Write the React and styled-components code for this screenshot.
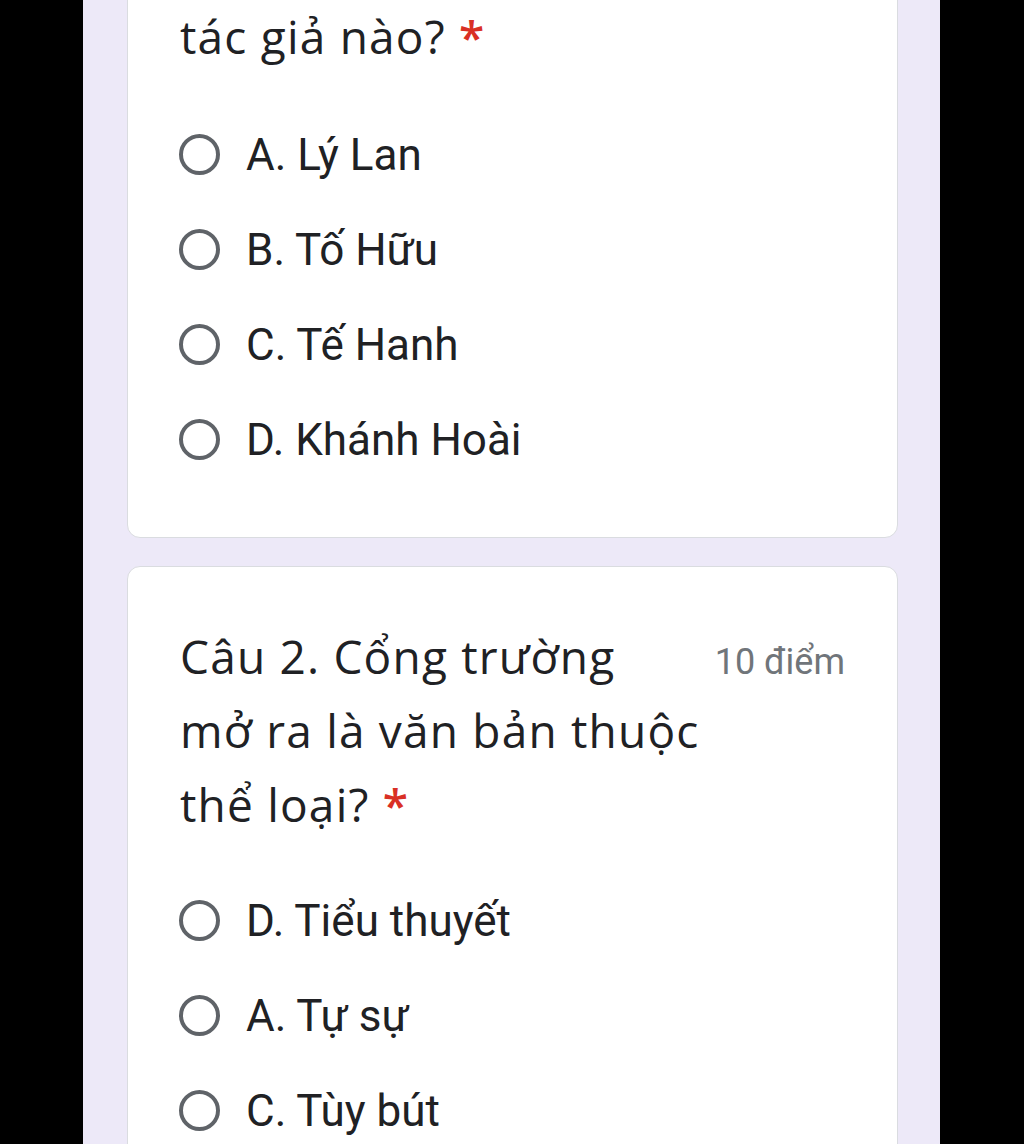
import React from "react";
import styled, { createGlobalStyle } from "styled-components";

const GlobalStyle = createGlobalStyle`
  html, body {
    margin: 0;
    padding: 0;
    background: #000;
    overflow: hidden;
  }
`;

const Column = styled.div`
  width: 857px;
  min-height: 1144px;
  margin-left: 83px;
  padding: 0 42px 0 44px;
  box-sizing: border-box;
  background: #ede9f8;
  overflow: hidden;
`;

const Scroll = styled.div`
  margin-top: -26px;
  display: flex;
  flex-direction: column;
  gap: 28px;
`;

const Card = styled.section`
  background: #fff;
  border: 1px solid #dadce0;
  border-radius: 13px;
  padding: ${(p) => p.$top}px 52px ${(p) => p.$bottom}px 52px;
`;

const Header = styled.div`
  display: flex;
  align-items: baseline;
  justify-content: space-between;
  gap: 10px;
`;

const Title = styled.h2`
  margin: 0;
  white-space: pre;
  font-family: "Open Sans", "Noto Sans", sans-serif;
  font-weight: 400;
  font-size: 46px;
  letter-spacing: 1.2px;
  line-height: 74px;
  color: #202124;
`;

const Required = styled.span`
  color: #d93025;
  font-weight: 600;
`;

const Points = styled.span`
  flex-shrink: 0;
  font-family: Roboto, "Noto Sans", sans-serif;
  font-size: 36px;
  color: #70757a;
`;

const Options = styled.div`
  margin-top: ${(p) => p.$gap}px;
  display: flex;
  flex-direction: column;
`;

const Option = styled.label`
  height: 95px;
  display: flex;
  align-items: center;
  gap: 26px;
  font-family: Roboto, "Noto Sans", sans-serif;
  font-size: 44px;
  color: #202124;
  cursor: pointer;
`;

const Radio = styled.span`
  width: 41px;
  height: 41px;
  margin-left: -1px;
  box-sizing: border-box;
  border: 4px solid #5f6368;
  border-radius: 50%;
  flex-shrink: 0;
`;

const questions = [
  {
    id: 1,
    title: "tác giả nào?",
    options: ["A. Lý Lan", "B. Tố Hữu", "C. Tế Hanh", "D. Khánh Hoài"],
    top: 24,
    bottom: 50,
    gap: 34,
  },
  {
    id: 2,
    title: "Câu 2. Cổng trường\nmở ra là văn bản thuộc\nthể loại?",
    points: "10 điểm",
    options: ["D. Tiểu thuyết", "A. Tự sự", "C. Tùy bút"],
    top: 52,
    bottom: 50,
    gap: 32,
  },
];

export default function App() {
  return (
    <>
      <GlobalStyle />
      <Column>
        <Scroll>
          {questions.map((q) => (
            <Card key={q.id} $top={q.top} $bottom={q.bottom}>
              <Header>
                <Title>
                  {q.title} <Required>*</Required>
                </Title>
                {q.points && <Points>{q.points}</Points>}
              </Header>
              <Options $gap={q.gap}>
                {q.options.map((o) => (
                  <Option key={o}>
                    <Radio />
                    {o}
                  </Option>
                ))}
              </Options>
            </Card>
          ))}
        </Scroll>
      </Column>
    </>
  );
}
